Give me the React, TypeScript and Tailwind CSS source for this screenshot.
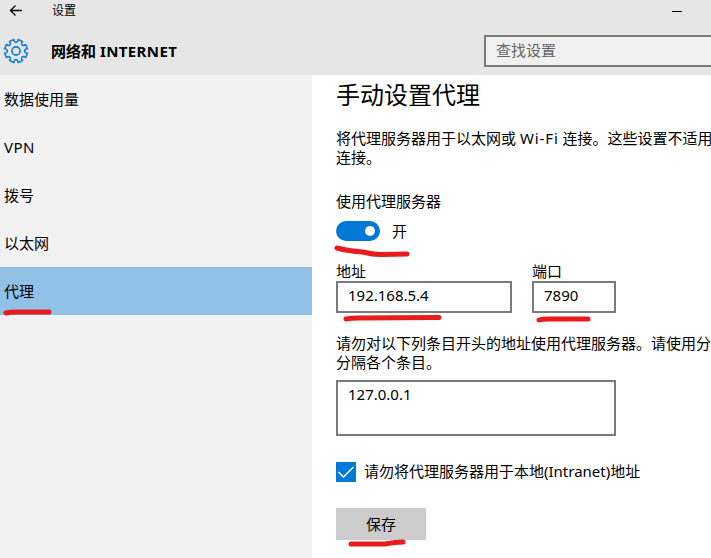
import type { ReactNode } from "react";

const navItems = ["数据使用量", "VPN", "拨号", "以太网", "代理"];

function Stroke({ d, className, width = 5 }: { d: string; className: string; width?: number }) {
  return (
    <svg className={`pointer-events-none absolute overflow-visible ${className}`} width="1" height="1" fill="none" stroke="#e81c1c" strokeWidth={width} strokeLinecap="round" strokeLinejoin="round">
      <path d={d} />
    </svg>
  );
}

function GearIcon() {
  const teeth = 8;
  const points: string[] = [];
  for (let i = 0; i < teeth; i++) {
    const a = (i * 2 * Math.PI) / teeth + Math.PI / 8;
    const at = (r: number, o: number) => `${(12 + r * Math.sin(a + o)).toFixed(2)} ${(12 - r * Math.cos(a + o)).toFixed(2)}`;
    points.push(`${i === 0 ? "M" : "L"}${at(11.6, -0.2)}L${at(11.6, 0.2)}L${at(9.8, 0.22)}Q${at(7.4, 0.393)} ${at(9.8, 0.565)}`);
  }
  return (
    <svg width="24" height="24" viewBox="0 0 24 24" overflow="visible" fill="none" stroke="#0f7ddb" strokeWidth="1.6" strokeLinejoin="round">
      <path d={points.join("") + "Z"} />
      <circle cx="12" cy="12" r="4.1" />
    </svg>
  );
}

function Field({ label, value, className, children }: { label: string; value: string; className: string; children: ReactNode }) {
  return (
    <div className={`relative ${className}`}>
      <div className="h-5 leading-5">{label}</div>
      <div className="h-8 border-2 border-[#7a7a7a] px-2.5 leading-6">{value}</div>
      {children}
    </div>
  );
}

export default function App() {
  return (
    <div className="flex h-[558px] w-[711px] flex-col overflow-hidden bg-white font-['Noto_Sans','Noto_Sans_CJK_SC',sans-serif] text-[15px] text-black">
      <header className="h-[75px] shrink-0 bg-[#e6e6e6]">
        <div className="flex h-[21px] items-center pl-[9px]">
          <svg width="14" height="13" viewBox="0 0 14 13" fill="none" stroke="#000" strokeWidth="1.3">
            <path d="M13 6.5H1.5M6.5 1.5l-5 5 5 5" />
          </svg>
          <span className="ml-[29px] text-xs leading-5">设置</span>
          <span className="mt-[2px] ml-auto mr-[29px] h-px w-[10px] bg-black" />
        </div>
        <div className="flex h-[54px] pl-1">
          <div className="pt-[18px]"><GearIcon /></div>
          <h1 className="ml-[23px] pt-5 text-[15px] leading-5 font-bold">网络和 <span className="tracking-[0.4px]">INTERNET</span></h1>
          <div className="mt-[14px] -mr-1 ml-auto h-8 w-[231px] border-2 border-[#7a7a7a] bg-[#f0f0f0] pl-2.5 leading-[27px] text-[#666]">查找设置</div>
        </div>
      </header>
      <div className="flex min-h-0 flex-1">
        <nav className="w-[312px] shrink-0 bg-[#f2f2f2]">
          {navItems.map((item) => (
            <div key={item} className={`relative flex h-12 items-center pl-1 ${item === "代理" ? "bg-[#91c1e7]" : ""} ${item === "VPN" ? "tracking-[0.5px]" : ""}`}>
              {item}
              {item === "代理" && <Stroke className="top-0 left-0" d="M6 46Q10 45 18 45L49 45" />}
            </div>
          ))}
        </nav>
        <main className="min-w-0 flex-1 overflow-hidden pl-6 whitespace-nowrap">
          <h2 className="pt-1 text-2xl leading-8">手动设置代理</h2>
          <p className="mt-[18px] leading-[19px]">将代理服务器用于以太网或 <span className="tracking-[0.9px]">Wi-Fi</span> 连接。这些设置不适用<br />连接。</p>
          <div className="mt-6 leading-5">使用代理服务器</div>
          <div className="relative mt-[10px] flex h-5 items-center">
            <div className="flex h-5 w-11 items-center justify-end rounded-full bg-[#0078d7] pr-[5px]">
              <div className="size-[10px] rounded-full bg-white" />
            </div>
            <span className="ml-3 leading-5">开</span>
            <Stroke className="top-0 left-0" d="M1 27Q12 30 27 31Q38 34 46 33.5L71 33" />
          </div>
          <div className="mt-5 flex gap-5">
            <Field label="地址" value="192.168.5.4" className="w-44">
              <Stroke className="top-0 left-0" d="M10 58Q15 57 23 57L103 56.5" />
            </Field>
            <Field label="端口" value="7890" className="w-[84px]">
              <Stroke className="top-0 left-0" d="M7 59Q10 58 16 58L56 58" />
            </Field>
          </div>
          <p className="mt-[21px] leading-[19px]">请勿对以下列条目开头的地址使用代理服务器。请使用分<br />分隔各个条目。</p>
          <div className="mt-2 h-14 w-[280px] border-2 border-[#7a7a7a] px-2.5 leading-6">127.0.0.1</div>
          <div className="mt-[26px] flex h-5 items-start">
            <div className="size-5 bg-[#0078d7]">
              <svg width="20" height="20" fill="none" stroke="#fff" strokeWidth="1.4"><path d="M2.5 10L7.5 15 17.5 5" /></svg>
            </div>
            <span className="ml-2 leading-[18px]">请勿将代理服务器用于本地(Intranet)地址</span>
          </div>
          <div className="relative mt-[26px] flex h-8 w-[90px] items-center justify-center bg-[#ccc]">
            保存
            <Stroke className="top-0 left-0" d="M15 36L49 36Q60 34 67 34" />
          </div>
        </main>
      </div>
    </div>
  );
}
